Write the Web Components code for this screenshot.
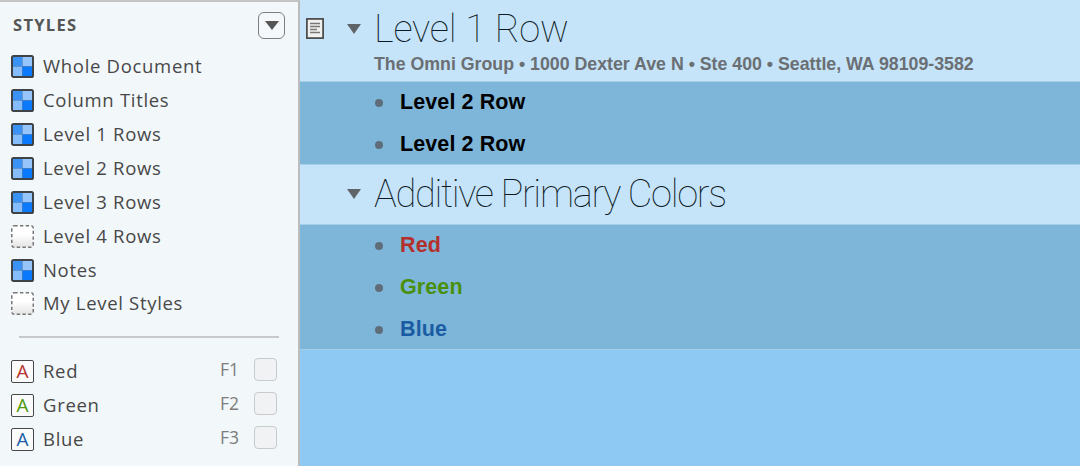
<!DOCTYPE html>
<html lang="en">
<head>
<title>Styles</title>
<style>
html, body { margin: 0; height: 100%; overflow: hidden; }
body { display: flex; width: 1080px; height: 466px; background: #8dc9f2; }
</style>
</head>
<body>
<styles-sidebar>
    <style-row kind="grid">Whole Document</style-row>
    <style-row kind="grid">Column Titles</style-row>
    <style-row kind="grid">Level 1 Rows</style-row>
    <style-row kind="grid">Level 2 Rows</style-row>
    <style-row kind="grid">Level 3 Rows</style-row>
    <style-row kind="empty">Level 4 Rows</style-row>
    <style-row kind="grid">Notes</style-row>
    <style-row kind="empty">My Level Styles</style-row>
    <style-row slot="named" kind="letter" color="#b5312c" key="F1">Red</style-row>
    <style-row slot="named" kind="letter" color="#4f9a0e" key="F2">Green</style-row>
    <style-row slot="named" kind="letter" color="#1b5fa8" key="F3">Blue</style-row>
</styles-sidebar>
<outline-view>
    <level-one note height="81" spacing="-.22" sub="The Omni Group • 1000 Dexter Ave N • Ste 400 • Seattle, WA 98109-3582">Level 1 Row</level-one>
    <level-group>
        <level-two>Level 2 Row</level-two>
        <level-two>Level 2 Row</level-two>
    </level-group>
    <level-one height="59" spacing="-1.3">Additive Primary Colors</level-one>
    <level-group>
        <level-two color="#b5302c">Red</level-two>
        <level-two color="#4a8f0c">Green</level-two>
        <level-two color="#1a5ca3">Blue</level-two>
    </level-group>
</outline-view>

<script>
    class StylesSidebar extends HTMLElement {
        constructor() {
            super();
            this.attachShadow({mode:'open'});
            this.shadowRoot.innerHTML = `
            <style>
                :host { display: flex; flex-direction: column; box-sizing: border-box; width: 300px; height: 466px;
                    background: #f2f7fa; border-top: 2px solid #c4c4c4; border-right: 2px solid #bcbcbc;
                    font-family: "Open Sans", sans-serif; color: #484848; }
                header { display: flex; justify-content: space-between; align-items: center; height: 48px; padding: 0 13px 0 13px; }
                h2 { margin: 0; font-size: 16.5px; font-weight: 700; letter-spacing: 1.3px; color: #555; position: relative; top: -2px; }
                button { box-sizing: border-box; width: 27px; height: 27px; padding: 0; border: 1.5px solid #7e7e7e; border-radius: 6px; background: #f5f8fa;
                    display: flex; align-items: center; justify-content: center; position: relative; top: -1px; }
                .list { display: flex; flex-direction: column; }
                hr { margin: 15px 19px 17px 19px; height: 2px; border: 0; background: #c6c8c9; }
            </style>
            <header>
                <h2>STYLES</h2>
                <button><svg width="14" height="9" viewBox="0 0 14 9"><path d="M0 0H14L7 9Z" fill="#555"/></svg></button>
            </header>
            <div class="list"><slot></slot></div>
            <hr>
            <div class="list"><slot name="named"></slot></div>`;
        }
    }
    customElements.define('styles-sidebar', StylesSidebar);

    class StyleRow extends HTMLElement {
        constructor() {
            super();
            this.attachShadow({mode:'open'});
        }

        connectedCallback() {
            let kind = this.getAttribute('kind');
            let color = this.getAttribute('color');
            let key = this.getAttribute('key');
            let icon;
            if(kind == 'grid'){
                icon = `<svg class="icon" width="23" height="23" viewBox="0 0 23 23">
                    <rect x=".6" y=".6" width="21.8" height="21.8" rx="2" fill="#3f4347" stroke="#3f4347" stroke-width="1.2"/>
                    <rect x="2" y="2" width="9.5" height="9.5" fill="#3a92f5"/><rect x="11.5" y="2" width="9.5" height="9.5" fill="#95c5fa"/>
                    <rect x="2" y="11.5" width="9.5" height="9.5" fill="#85bdfb"/><rect x="11.5" y="11.5" width="9.5" height="9.5" fill="#0b79fb"/></svg>`;
            }else if(kind == 'empty'){
                icon = `<svg class="icon" width="23" height="23" viewBox="0 0 23 23">
                    <defs><linearGradient id="g" x1="0" y1="0" x2="0" y2="1"><stop offset=".4" stop-color="#fff"/><stop offset="1" stop-color="#e4e4e4"/></linearGradient></defs>
                    <rect x=".75" y=".75" width="21.5" height="21.5" rx="2.5" fill="url(#g)" stroke="#777" stroke-width="1.5" stroke-dasharray="3.4 2.3"/></svg>`;
            }else{
                icon = `<span class="icon letter" style="color:${color}">A</span>`;
            }
            let shortcut = key ? `<span class="key">${key}</span><span class="check"></span>` : '';
            this.shadowRoot.innerHTML = `
            <style>
                :host { display: flex; align-items: center; height: 33.86px; padding: 0 20px 0 11px; font-size: 18.5px; font-weight: 500; letter-spacing: .69px; }
                .icon { flex: none; margin-right: 9px; }
                .letter { box-sizing: border-box; width: 23px; height: 23px; border: 1.5px solid #45484b; border-radius: 2px; background: #fbfbfb;
                    display: flex; align-items: center; justify-content: center; font-size: 19px; font-weight: 500; line-height: 1; letter-spacing: 0; }
                .label { flex: 1; position: relative; top: -1px; }
                .key { color: #7d7d7d; font-size: 17.5px; margin-right: 16px; position: relative; top: -3px; letter-spacing: 0; }
                .check { box-sizing: border-box; width: 23px; height: 23px; border: 1.5px solid #c8cbcd; border-radius: 4px; background: #f0f2f4; position: relative; top: -2px; left: -1px; }
            </style>
            ${icon}<span class="label"><slot></slot></span>${shortcut}`;
        }
    }
    customElements.define('style-row', StyleRow);

    class OutlineView extends HTMLElement {
        constructor() {
            super();
            this.attachShadow({mode:'open'});
            this.shadowRoot.innerHTML = `
            <style>
                :host { display: block; flex: 1; font-family: "Liberation Sans", Arial, sans-serif; }
            </style>
            <slot></slot>`;
        }
    }
    customElements.define('outline-view', OutlineView);

    class LevelOne extends HTMLElement {
        constructor() {
            super();
            this.attachShadow({mode:'open'});
        }

        connectedCallback() {
            let sub = this.getAttribute('sub');
            let note = this.hasAttribute('note') ? `<svg class="note" width="18" height="21" viewBox="0 0 18 21">
                <rect x=".9" y=".9" width="16.2" height="19.2" fill="#f0f0ee" stroke="#4f4f4f" stroke-width="1.8"/>
                <path d="M4 5.5H14M4 8.5H14M4 11.5H11M4 14.5H14" stroke="#777" stroke-width="1.4"/></svg>` : '';
            this.shadowRoot.innerHTML = `
            <style>
                :host { display: block; box-sizing: border-box; height: ${this.getAttribute('height')}px; background: #c6e4f9; position: relative; padding-left: 74px; }
                .note { position: absolute; left: 6px; top: 18px; }
                .tri { position: absolute; left: 47px; top: 24px; }
                .title { font-family: Roboto, sans-serif; font-weight: 100; font-size: 38px; line-height: 36px; padding-top: 11px; color: #0c1a26; letter-spacing: ${this.getAttribute('spacing')}px; white-space: nowrap; }
                .sub { font-size: 17.75px; font-weight: 700; color: #6a6f74; margin-top: 7px; white-space: nowrap; }
            </style>
            ${note}
            <svg class="tri" width="14" height="10" viewBox="0 0 14 10"><path d="M0 0H14L7 10Z" fill="#5f6468"/></svg>
            <div class="title"><slot></slot></div>
            ${sub ? `<div class="sub">${sub}</div>` : ''}`;
        }
    }
    customElements.define('level-one', LevelOne);

    class LevelGroup extends HTMLElement {
        constructor() {
            super();
            this.attachShadow({mode:'open'});
            this.shadowRoot.innerHTML = `
            <style>
                :host { display: block; background: #7eb6d9; box-shadow: inset 0 1px 0 #a4cfe9, inset 0 -1px 0 #a4cfe9; }
            </style>
            <slot></slot>`;
        }
    }
    customElements.define('level-group', LevelGroup);

    class LevelTwo extends HTMLElement {
        constructor() {
            super();
            this.attachShadow({mode:'open'});
        }

        connectedCallback() {
            this.shadowRoot.innerHTML = `
            <style>
                :host { display: flex; align-items: center; height: 42px; padding-left: 75px; padding-top: 1px; box-sizing: border-box; font-size: 21.5px; font-weight: 700; letter-spacing: .1px; color: ${this.getAttribute('color') || '#000'}; }
                i { width: 8px; height: 8px; border-radius: 50%; background: #5f6d7a; margin-right: 17px; }
            </style>
            <i></i><slot></slot>`;
        }
    }
    customElements.define('level-two', LevelTwo);
</script>
</body>
</html>
